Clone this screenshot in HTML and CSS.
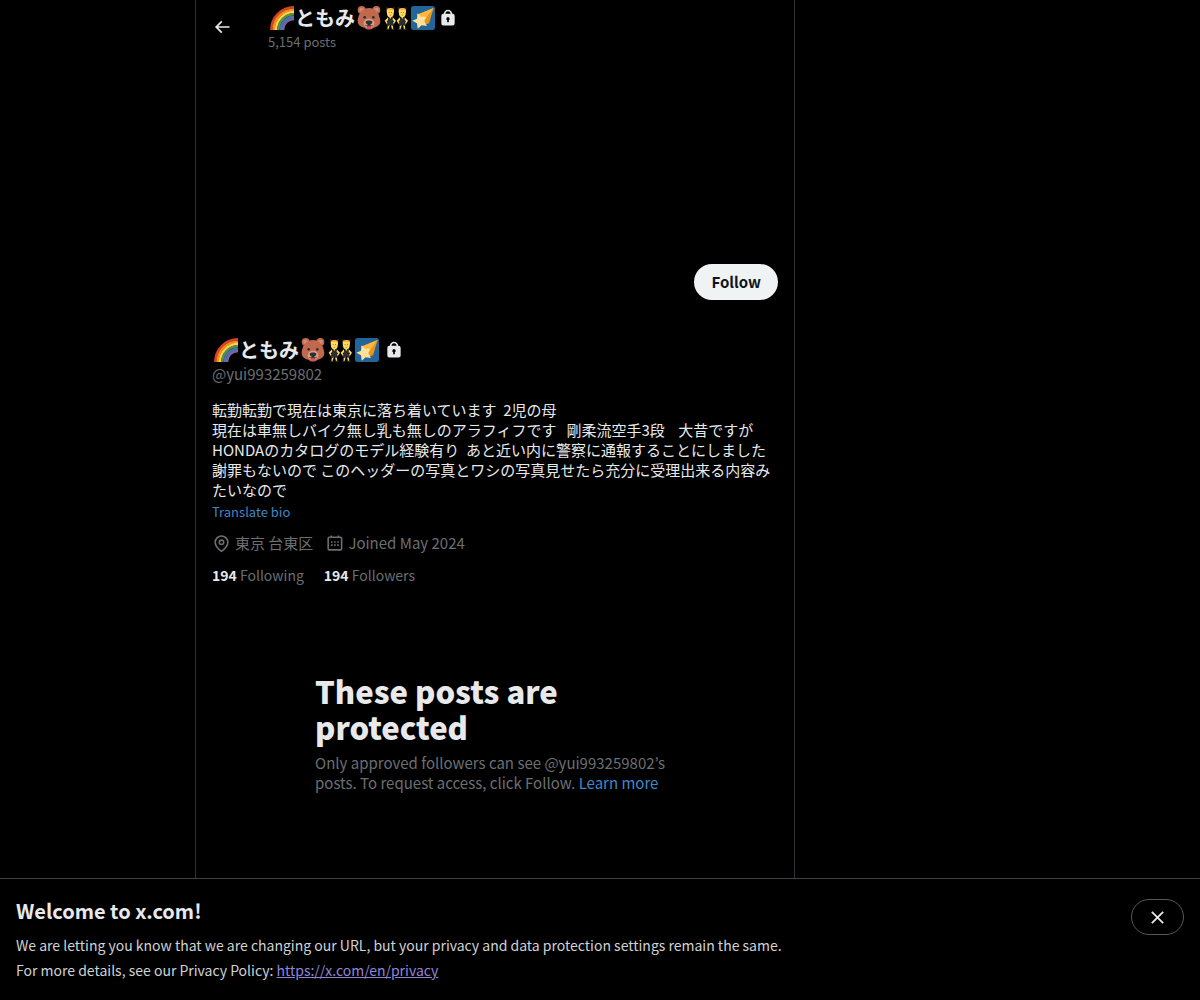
FILE: index.html
```html
<!DOCTYPE html>
<html lang="en">
<head>
<meta charset="utf-8">
<meta name="viewport" content="width=device-width, initial-scale=1">
<title>Profile</title>
<link rel="stylesheet" href="styles.css">
</head>
<body>
<svg class="sprite" aria-hidden="true">
  <symbol id="rainbow" viewBox="0 0 36 36">
    <g fill="none" stroke-width="3.800">
      <path stroke="#d8402f" d="M2 36A34 34 0 0 1 36 2"/>
      <path stroke="#f4900c" d="M5.500 36A30.500 30.500 0 0 1 36 5.500"/>
      <path stroke="#ffd25a" d="M9 36A27 27 0 0 1 36 9"/>
      <path stroke="#5c913b" d="M12.500 36A23.500 23.500 0 0 1 36 12.500"/>
      <path stroke="#3f78b5" d="M16 36A20 20 0 0 1 36 16"/>
      <path stroke="#7d62a3" d="M19.500 36A16.500 16.500 0 0 1 36 19.500"/>
    </g>
  </symbol>
  <symbol id="bear" viewBox="0 0 36 36">
    <circle fill="#c1694f" cx="7" cy="6" r="6"/><circle fill="#c1694f" cx="29" cy="6" r="6"/>
    <circle fill="#d08a78" cx="7" cy="6" r="3.500"/><circle fill="#d08a78" cx="29" cy="6" r="3.500"/>
    <path fill="#c1694f" d="M35 22S33.700 3 18 3 1 22 1 22c0 6 4 9 11 11 2 3 10 3 12 0 7-2 11-5 11-11z"/>
    <ellipse fill="#d99e82" cx="18" cy="26" rx="8" ry="7"/>
    <circle fill="#292f33" cx="11.500" cy="17" r="2"/><circle fill="#292f33" cx="24.500" cy="17" r="2"/>
    <path fill="#dd4e5e" d="M15 30h6v2c0 4-6 4-6 0z"/>
    <path fill="#292f33" d="M13 24c0-3 10-3 10 0 0 2-2 4-4 4.500 2 1 4 .5 5 0-1 2-4 2.500-6 1-2 1.500-5 1-6-1 1 .5 3 1 5 0-2-.5-4-2.500-4-4.500z"/>
  </symbol>
  <symbol id="dancer" viewBox="0 0 18 36">
    <path fill="#292f33" d="M4 7 3 1l5 3h3l5-3-1 6z"/>
    <path fill="#ffac33" d="M4 6c0-4 11-4 11 0v4H4z"/>
    <path fill="#ffdc5d" d="M4.500 6h10v6c0 3-2 5-5 5s-5-2-5-5zM8 15h3v4H8zM6 17l-5 5 4 6 1.500-1L4 22.500 7 21zM13 17l5 5-4 6-1.500-1 2.500-4.500-3-1.500zM6 27h3l-2 8H5zM10 27h3l1 8h-2z"/>
    <path fill="#292f33" d="M6 18h2l1.500 1.500L11 18h2v5l2 5-3 2-2.500-2L7 30l-3-2 2-5zM4 34h4v2H3zM11 34h4l1 2h-5z"/>
    <path fill="#c1694f" d="M7 9h1.500v1.500H7zM10.500 9H12v1.500h-1.500zM7.500 13h4l-2 1.500z"/>
  </symbol>
  <symbol id="dancers" viewBox="0 0 36 36">
    <use href="#dancer" x="0" y="0" width="18" height="36"/>
    <use href="#dancer" x="18" y="0" width="18" height="36"/>
  </symbol>
  <symbol id="comet" viewBox="0 0 36 36">
    <rect fill="#226699" width="36" height="36" rx="4"/>
    <path fill="#e8961e" d="M9 13 34 3 27 26 18 29z"/>
    <path fill="#ffb743" d="M9 13 34 3 20 21z"/>
    <path fill="#ffe09a" d="m10 11 5 5 8 0-3 7 4 7-8-1-6 5-1-8-7-4 7-3z"/>
  </symbol>
  <symbol id="lock" viewBox="0 0 24 24">
    <path fill="currentColor" fill-rule="evenodd" d="M17.500 7H17a5 5 0 0 0-10 0h-.5A2.500 2.500 0 0 0 4 9.500v9A2.500 2.500 0 0 0 6.500 21h11a2.500 2.500 0 0 0 2.500-2.500v-9A2.500 2.500 0 0 0 17.500 7zM13 14.700V17h-2v-2.300a2 2 0 1 1 2 0zM15 7H9a3 3 0 0 1 6 0z"/>
  </symbol>
</svg>

<div class="page">
  <div class="columns">
    <main class="timeline">
      <header class="topbar">
        <button class="back" type="button" aria-label="Back">
          <svg class="icon" viewBox="0 0 24 24" aria-hidden="true"><path fill="currentColor" d="m7.414 13 5.043 5.040-1.414 1.420L3.586 12l7.457-7.460 1.414 1.420L7.414 11H21v2z"/></svg>
        </button>
        <div>
          <h2 class="name"><svg class="emoji"><use href="#rainbow"/></svg><span>ともみ</span><svg class="emoji"><use href="#bear"/></svg><svg class="emoji"><use href="#dancers"/></svg><svg class="emoji"><use href="#comet"/></svg><svg class="lock"><use href="#lock"/></svg></h2>
          <p class="count">5,154 posts</p>
        </div>
      </header>

      <section class="profile">
        <div class="actions"><button class="follow" type="button">Follow</button></div>
        <h1 class="name"><svg class="emoji"><use href="#rainbow"/></svg><span>ともみ</span><svg class="emoji"><use href="#bear"/></svg><svg class="emoji"><use href="#dancers"/></svg><svg class="emoji"><use href="#comet"/></svg><svg class="lock lock-profile"><use href="#lock"/></svg></h1>
        <p class="handle">@yui993259802</p>
        <p class="bio" lang="ja">転勤転勤で現在は東京に落ち着いています  2児の母
現在は車無しバイク無し乳も無しのアラフィフです   剛柔流空手3段    大昔ですが
HONDAのカタログのモデル経験有り  あと近い内に警察に通報することにしました
謝罪もないので このヘッダーの写真とワシの写真見せたら充分に受理出来る内容みたいなので</p>
        <button class="translate" type="button">Translate bio</button>
        <div class="meta">
          <span class="meta-item">
            <svg class="meta-icon" viewBox="0 0 24 24" fill="none" stroke="currentColor" stroke-width="2" aria-hidden="true"><path d="M12 21.800S4 16.500 4 10.500a8 8 0 0 1 16 0c0 6-8 11.300-8 11.300z"/><circle cx="12" cy="10.500" r="2.800"/></svg>
            <span lang="ja">東京 台東区</span>
          </span>
          <span class="meta-item">
            <svg class="meta-icon" viewBox="0 0 24 24" fill="none" stroke="currentColor" stroke-width="2" aria-hidden="true"><rect x="4" y="4" width="17" height="16" rx="1.500"/><path d="M8 2v3M17 2v3M7.500 10h2M11.500 10h2M15.500 10h2M7.500 14h2M11.500 14h2M15.500 14h2"/></svg>
            <span>Joined May 2024</span>
          </span>
        </div>
        <div class="stats">
          <a href="#following"><b>194</b> Following</a>
          <a href="#followers"><b>194</b> Followers</a>
        </div>
      </section>

      <section class="protected">
        <h2>These posts are protected</h2>
        <p>Only approved followers can see @yui993259802’s posts. To request access, click Follow. <a href="#learn">Learn more</a></p>
      </section>
    </main>
  </div>

  <aside class="notice">
    <div>
      <h2>Welcome to x.com!</h2>
      <p>We are letting you know that we are changing our URL, but your privacy and data protection settings remain the same.</p>
      <p>For more details, see our Privacy Policy: <a href="#privacy">https://x.com/en/privacy</a></p>
    </div>
    <button class="close" type="button" aria-label="Close">
      <svg class="icon" viewBox="0 0 24 24" aria-hidden="true"><path fill="none" stroke="currentColor" stroke-width="2.500" d="m4 4 16 16M20 4 4 20"/></svg>
    </button>
  </aside>
</div>
</body>
</html>
```

FILE: styles.css
```css
* { box-sizing: border-box; }

body {
  margin: 0;
  background: #000;
  color: #e7e9ea;
  font: 15px/20px "Noto Sans CJK JP", sans-serif;
}

h1, h2, p { margin: 0; }
button { padding: 0; border: 0; background: none; color: inherit; font: inherit; cursor: pointer; }
a { color: #4187c9; text-decoration: none; }

.sprite { display: block; width: 0; height: 0; }

.page { display: flex; flex-direction: column; min-height: 100vh; }

.columns {
  flex: 1;
  display: grid;
  grid-template-columns: minmax(0, 195fr) minmax(0, 600px) minmax(0, 405fr);
}

.timeline {
  grid-column: 2;
  border: solid #2f3336;
  border-width: 0 1px;
}

.topbar { display: flex; align-items: center; height: 53px; padding: 0 16px; }
.back { display: flex; width: 56px; }
.icon { width: 20px; height: 20px; }

.name { display: flex; align-items: center; font-size: 20px; line-height: 24px; font-weight: 700; }
.topbar .name { margin-top: 2px; line-height: 28px; }
.emoji { width: 24px; height: 24px; margin: 0 1px 0 2px; }
.lock { width: 20px; height: 20px; margin-left: 2px; }
.lock-profile { margin-left: 4px; }
.count { color: #6b6f72; font-size: 13px; line-height: 20px; }

.profile { padding: 0 16px; }
.actions { display: flex; justify-content: flex-end; padding-top: 211px; }
.follow {
  height: 36px;
  padding: 0 17px;
  border-radius: 18px;
  background: #eff3f4;
  color: #0f1419;
  font-weight: 700;
}
.profile .name { margin-top: 38px; }
.handle { margin-top: 2px; color: #6b6f72; }
.bio { margin-top: 16px; white-space: pre-wrap; }
.translate { display: block; margin-top: 2px; color: #4187c9; font-size: 13px; }
.meta { display: flex; gap: 12px; margin-top: 11px; color: #6b6f72; }
.meta-item { display: flex; align-items: center; gap: 4px; }
.meta-icon { width: 19px; height: 19px; }
.stats { display: flex; gap: 20px; margin-top: 12px; font-size: 14px; }
.stats a { color: #6b6f72; }
.stats b { color: #e7e9ea; }

.protected { width: 360px; max-width: 100%; margin: 88px auto 72px; }
.protected h2 { font-size: 31px; line-height: 36px; font-weight: 800; }
.protected p { margin-top: 8px; color: #6b6f72; }
.protected a { display: inline-block; }

.notice {
  display: flex;
  justify-content: space-between;
  align-items: flex-start;
  gap: 16px;
  padding: 20px 16px 17px;
  border-top: 1px solid #3e4144;
}
.notice h2 { margin-bottom: 10px; font-size: 20px; line-height: 24px; }
.notice p { font-size: 14px; line-height: 25px; color: #d0d2d3; }
.notice a { color: #8f86d8; text-decoration: underline; }
.close {
  display: flex;
  flex: none;
  align-items: center;
  justify-content: center;
  width: 53px;
  height: 36px;
  border: 1px solid #55585a;
  border-radius: 18px;
}
.close .icon { width: 17px; height: 17px; }
```
